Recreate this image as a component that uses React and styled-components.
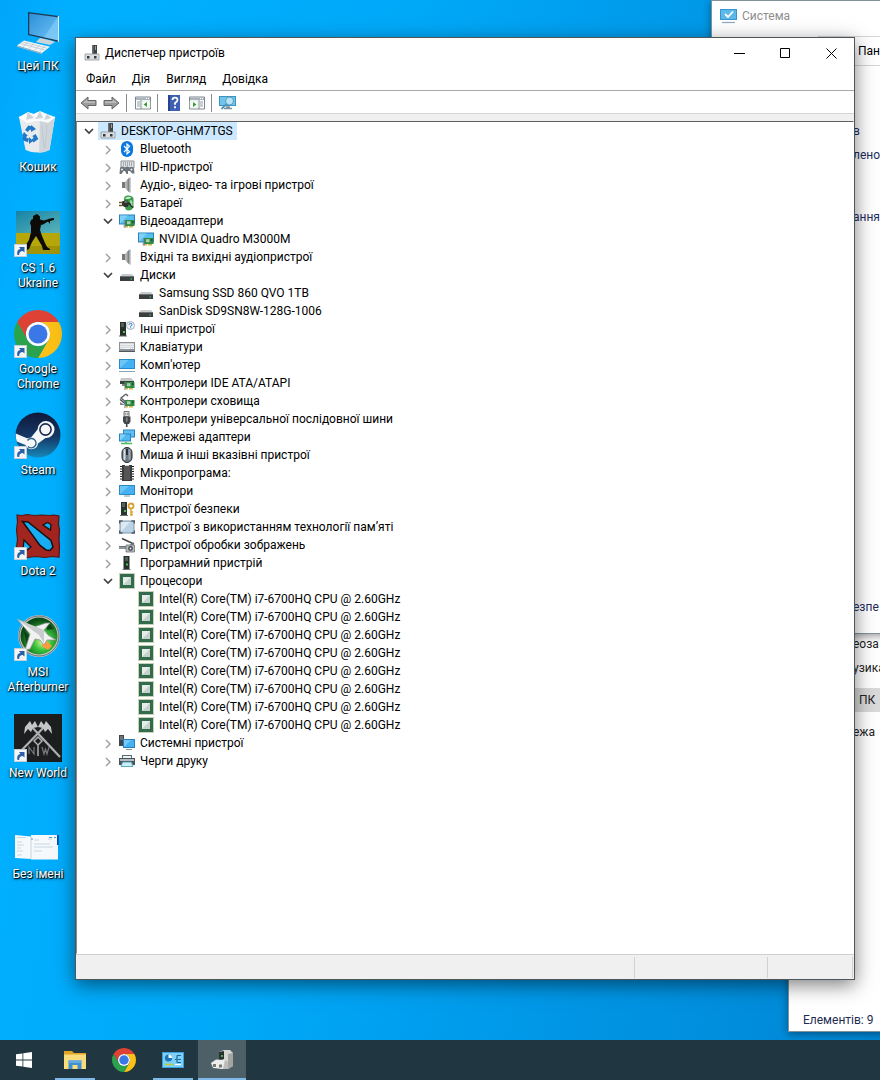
import React, { useState } from "react";
import styled, { createGlobalStyle, css } from "styled-components";

const UI_FONT = '"Segoe UI", Roboto, "Open Sans", sans-serif';

const GlobalStyle = createGlobalStyle`
  *, *::before, *::after { box-sizing: border-box; }
  body {
    margin: 0;
    font-family: ${UI_FONT};
    font-size: 12px;
    line-height: 18px;
    color: #000;
  }
  button {
    margin: 0;
    padding: 0;
    border: 0;
    background: none;
    font: inherit;
    color: inherit;
  }
  ul { margin: 0; padding: 0; list-style: none; }
  svg { display: block; flex: none; }
`;

/* ---------- shell ---------- */

const Screen = styled.div`
  display: flex;
  flex-direction: column;
  height: 100vh;
  min-height: 900px;
  overflow: hidden;
`;

const Desktop = styled.main`
  position: relative;
  flex: 1;
  overflow: hidden;
  background: linear-gradient(100deg, #00a6fb 0%, #00b0ff 8%, #00a8f8 40%, #0095e4 72%, #0086d4 100%);
`;

const Shortcuts = styled.ul`
  width: 76px;
`;

const ShortcutCell = styled.li`
  height: 101px;
  padding-top: 7px;
`;

const ShortcutButton = styled.button`
  display: flex;
  flex-direction: column;
  align-items: center;
  gap: 4px;
  width: 100%;
`;

const ShortcutPicture = styled.span`
  position: relative;
  width: 48px;
  height: 48px;
`;

const ArrowBadge = styled.span`
  position: absolute;
  left: 0;
  bottom: 0;
`;

const ShortcutLabel = styled.span`
  font-size: 12px;
  line-height: 15px;
  color: #fff;
  text-shadow: 1px 1px 1px #000, 0 1px 3px rgba(0, 0, 0, 0.8);
`;

/* ---------- windows ---------- */

const WindowFrame = styled.section`
  position: absolute;
  display: flex;
  flex-direction: column;
  background: #fff;
  border: 1px solid ${(p) => (p.$active ? "#4d565b" : "#7f929c")};
  box-shadow: ${(p) =>
    p.$active ? "0 5px 18px rgba(0, 0, 0, 0.5)" : "0 2px 8px rgba(0, 0, 0, 0.4)"};
`;

const ExplorerFrame = styled(WindowFrame)`
  left: 788px;
  right: -20px;
  top: 560px;
  bottom: 8px;
`;

const SystemFrame = styled(WindowFrame)`
  left: 711px;
  right: -20px;
  top: 0;
  height: 634px;
`;

const ManagerFrame = styled(WindowFrame)`
  left: 75px;
  right: 25px;
  top: 37px;
  bottom: 60px;
`;

const TitleBar = styled.header`
  display: flex;
  align-items: center;
  height: 30px;
  padding-left: 8px;
  gap: 5px;
  color: ${(p) => (p.$muted ? "#8f8f8f" : "#000")};
`;

const Title = styled.h1`
  flex: 1;
  margin: 0;
  font-size: 12px;
  font-weight: 400;
  white-space: nowrap;
`;

const CaptionButtons = styled.div`
  display: flex;
`;

const CaptionButton = styled.button`
  display: flex;
  align-items: center;
  justify-content: center;
  width: 46px;
  height: 28px;
`;

const MenuBar = styled.nav`
  display: flex;
  height: 22px;
  padding: 0 2px;
`;

const MenuButton = styled.button`
  padding: 0 8px;
  line-height: 22px;
`;

const ToolBar = styled.div`
  display: flex;
  align-items: center;
  gap: 6px;
  height: 24px;
  padding: 2px 0 0 4px;
  border-top: 1px solid #a9a9a9;
  border-bottom: 1px solid #d5d5d5;
`;

const ToolButton = styled.button`
  width: 17px;
  height: 18px;
  display: flex;
  align-items: center;
  justify-content: center;
`;

const ToolDivider = styled.span`
  width: 1px;
  height: 18px;
  margin-right: 1px;
  background: #8a8a8a;
`;

const TreeArea = styled.div`
  display: flex;
  flex-direction: column;
  flex: 1;
  min-height: 0;
  padding-top: 7px;
  background: #f0f0f0;
`;

const TreePane = styled.div`
  flex: 1;
  padding-left: 5px;
  overflow: hidden;
  background: #fff;
  border: 1px solid #fff;
  border-top-color: #606060;
  border-left-color: #828790;
`;

const Branch = styled.ul`
  margin-left: ${(p) => (p.$root ? 0 : 19)}px;
`;

const Row = styled.div`
  display: flex;
  align-items: center;
  gap: 2px;
  height: 18px;
`;

const Expander = styled.button`
  display: flex;
  align-items: center;
  justify-content: center;
  width: 14px;
  height: 18px;
`;

const ExpanderSpace = styled.span`
  width: 14px;
`;

const Entry = styled.button`
  display: flex;
  align-items: center;
  gap: 5px;
  height: 18px;
  padding: 0 4px 0 2px;
  white-space: nowrap;
  ${(p) => p.$selected && css`background: #cce8ff;`}
`;

const StatusBar = styled.footer`
  display: flex;
  height: 25px;
  padding: 2px 1px 1px;
  background: #f0f0f0;
  border-top: 1px solid #d0d0d0;
`;

const StatusCell = styled.span`
  flex: ${(p) => p.$grow ? "1" : "none"};
  width: ${(p) => p.$width || "auto"};
  border-right: 1px solid #d0d0d0;
`;

const AddressBar = styled.div`
  margin-left: 106px;
  height: 30px;
  margin-top: 5px;
  padding-left: 39px;
  border: 1px solid #d5d5d5;
  line-height: 28px;
  white-space: nowrap;
`;

const LinkList = styled.nav`
  display: flex;
  flex-direction: column;
  flex: 1;
  align-items: flex-start;
  padding: 56px 0 17px 141px;
`;

const PanelLink = styled.a`
  margin-bottom: ${(p) => p.$after || 0}px;
  color: #1e2c60;
  text-decoration: none;
  white-space: nowrap;
  &:last-child { margin-top: auto; }
`;

const FolderList = styled.ul`
  flex: 1;
  padding-top: 71px;
`;

const Folder = styled.li`
  height: 24px;
  margin-bottom: ${(p) => p.$after || 0}px;
  padding-left: ${(p) => (p.$current ? 70 : 64)}px;
  line-height: 24px;
  white-space: nowrap;
  color: #222;
  background: ${(p) => (p.$current ? "#d9d9d9" : "transparent")};
`;

const FolderStatus = styled.footer`
  height: 22px;
  padding-left: 14px;
  line-height: 22px;
  color: #1e2c50;
`;

/* ---------- taskbar ---------- */

const TaskBar = styled.footer`
  display: flex;
  height: 40px;
  background: #203640;
`;

const TaskButton = styled.button`
  position: relative;
  display: flex;
  align-items: center;
  justify-content: center;
  width: 48px;
  height: 40px;
  background: ${(p) => (p.$active ? "#4d5f67" : "transparent")};
  ${(p) =>
    p.$running &&
    css`
      &::after {
        content: "";
        position: absolute;
        left: ${p.$active ? 0 : 4}px;
        right: ${p.$active ? 0 : 4}px;
        bottom: 0;
        height: 2px;
        background: #7fb9ea;
      }
    `}
`;

const Running = styled.div`
  display: flex;
  gap: 1px;
  margin-left: 3px;
`;

/* ---------- desktop drawings ---------- */

const Big = ({ children }) => (
  <svg width="48" height="48" viewBox="0 0 48 48" aria-hidden="true">{children}</svg>
);

const ThisPcArt = () => (
  <Big>
    <defs>
      <linearGradient id="pcScreen" x1="0" y1="0" x2="1" y2="1">
        <stop offset="0" stopColor="#2f8fd8" /><stop offset="1" stopColor="#6cc3f7" />
      </linearGradient>
    </defs>
    <path d="M14 5 45 9V35L14 28Z" fill="#1d3c55" />
    <path d="M15.3 6.5 43.8 10.2V33.3L15.3 27Z" fill="url(#pcScreen)" />
    <path d="M43.8 10.2V33.3L30 30.2Z" fill="#8fd3fb" opacity=".55" />
    <path d="M45 9V35L43.8 34.7V9Z" fill="#dfeaf1" />
    <path d="M26 31 36 33.2 41 35 36 38 22 35Z" fill="#c9d4db" />
    <path d="M10 33.5 36 39.8 28 46 3 38.5Z" fill="#f3f5f6" />
    <path d="M3 38.5 28 46V47.2L3 39.8Z" fill="#a9b7c0" />
    <path d="M8.5 35 33 41.2M6.5 36.6 30.8 43M14 34.6 9 39.8M20 36 15 41.6M26 37.6 20.500 43.400M31 38.900 25.500 45" stroke="#b9c5cc" strokeWidth=".8" />
  </Big>
);

const BinArt = () => (
  <Big>
    <path d="M5 9 41 9 35.500 42Q23 47 11.500 42Z" fill="#e7ebee" />
    <path d="M26 10 41 9 35.500 42Q30 45 25 45Z" fill="#cfd6db" />
    <path d="M5 9 14 4 20 6 26 3 33 6 41 9 34 14 24 12 13 14Z" fill="#f7f9fa" />
    <path d="M14 4 20 10 11 12ZM26 3 29 10 21 11ZM33 6 37 10 30 12Z" fill="#cbd3d9" />
    <path d="M20 6 24 4 23 9ZM8 9 13 7 12 12Z" fill="#fff" />
    <path d="M5 9 13 14 24 12 34 14 41 9" fill="none" stroke="#fff" strokeWidth="1.200" />
    <g fill="none" stroke="#2178c4" strokeWidth="3.600">
      <path d="M12.500 23 15 19.500 18.500 20.500" /><path d="M20 27 22 30.500 18.500 33" /><path d="M14.500 32.500 10.500 31 11 27" />
    </g>
    <path d="M17 17 22 21 17 24ZM15 29 15 36 19 33ZM8 28 14 28 10 24Z" fill="#2178c4" />
    <path d="M28 18 30 40M33 17 31 40" stroke="#bac4ca" strokeWidth=".8" />
  </Big>
);

const StrikeArt = () => (
  <Big>
    <defs>
      <linearGradient id="csSky" x1="0" y1="0" x2="1" y2="1">
        <stop offset="0" stopColor="#1583a6" /><stop offset="1" stopColor="#5bb5bb" />
      </linearGradient>
    </defs>
    <rect x="2" y="2" width="44" height="22" fill="url(#csSky)" />
    <rect x="2" y="24" width="44" height="21" fill="#b6a80b" />
    <path d="M2 37h44v8H2z" fill="#8e830c" opacity=".55" />
    <path d="M19 7 23 5 26 7.500 26 10.500 30 11.500 36 9.500 40 9V11L36 12V15L34 12.500 29 15.500 27 16 26 21 28 27 31 34 33 38 36 40V41H29L28 37 22 27 18 33 15 40 11 42 11 37 15 31 17 23 17 17 16 14 17 11 19 10Z" fill="#0d0b08" />
  </Big>
);

const ChromeShapes = () => (
  <>
    <path d="M24 12H44.780A24 24 0 0 0 3.220 12L13.610 30A12 12 0 0 1 24 12Z" fill="#de4235" />
    <path d="M44.780 12A24 24 0 0 1 24 48L34.390 30A12 12 0 0 0 24 12Z" fill="#fbc116" />
    <path d="M24 48A24 24 0 0 1 3.220 12L13.610 30A12 12 0 0 0 34.390 30Z" fill="#2ba24c" />
    <circle cx="24" cy="24" r="12" fill="#fff" />
    <circle cx="24" cy="24" r="9.500" fill="#3b78e7" />
  </>
);

const ChromeArt = () => <Big><ChromeShapes /></Big>;

const SteamArt = () => (
  <Big>
    <defs>
      <linearGradient id="steamDisc" x1="0" y1="0" x2="0" y2="1">
        <stop offset="0" stopColor="#10183a" /><stop offset=".55" stopColor="#143a68" /><stop offset="1" stopColor="#1788b8" />
      </linearGradient>
    </defs>
    <circle cx="24" cy="24" r="22.500" fill="url(#steamDisc)" />
    <path d="M1.700 22.500 13 27.300 17 26.500 23.500 18.500A8.500 8.500 0 1 1 31.500 27L24 32.500A6.500 6.500 0 0 1 11.500 34L2.800 30.500A23 23 0 0 1 1.700 22.500Z" fill="#f5f7f9" />
    <circle cx="31.500" cy="18.500" r="5.600" fill="#f5f7f9" stroke="#1b2c50" strokeWidth="1.600" />
    <path d="M13.500 29.500A4.700 4.700 0 1 1 14 35.500" fill="none" stroke="#31628a" strokeWidth="1.400" />
  </Big>
);

const DotaArt = () => (
  <Big>
    <path d="M3 3 8 3.500 13 2.500 20 3.500 28 3 35 3.500 40 3 45 4 44.500 12 45.500 18 45 27 45.500 35 45 45 38 44.500 31 45.500 22 44.500 13 45.500 3 45 2.500 36 3.500 27 2.500 18 3.500 10Z" fill="#a3251f" stroke="#5a1512" strokeWidth="1.200" />
    <path d="M8.500 9.500 14 10 37 28.500 39 35 36 38.500 32 38 26 33.500Z" fill="#17aef5" stroke="#1a1212" strokeWidth="1.600" />
    <path d="M29 13 33.500 10.500 37 12.500 36.500 18Z" fill="#17aef5" stroke="#1a1212" strokeWidth="1.300" />
    <path d="M10 28 17 35 13 38 9 37Z" fill="#17aef5" stroke="#1a1212" strokeWidth="1.300" />
  </Big>
);

const AfterburnerArt = () => (
  <Big>
    <defs>
      <radialGradient id="msiGlow" cx=".6" cy=".65" r=".6">
        <stop offset="0" stopColor="#e6f7a0" /><stop offset=".4" stopColor="#35c33b" /><stop offset="1" stopColor="#0a4a17" />
      </radialGradient>
    </defs>
    <circle cx="25" cy="23" r="21" fill="#c3cac9" />
    <circle cx="25" cy="23" r="20" fill="none" stroke="#6b7472" />
    <circle cx="25" cy="23" r="18.500" fill="url(#msiGlow)" />
    <path d="M30 26 38 33 34 37 28 33Z" fill="#ff9a3c" />
    <path d="M10 18 17 24 13 33ZM33 8 40 16 33 17Z" fill="#072a0e" opacity=".7" />
    <path d="M3 6 20 14 26 12 32 10 36 10 30 17 34 22 42 27 33 27 30 32 26 27 21 26 16 36 11 37 16 21Z" fill="#f1f1f1" stroke="#8d9391" strokeWidth=".8" />
    <path d="M3 6 30 17 30 30 25 22Z" fill="#c6cccb" />
  </Big>
);

const NewWorldArt = () => (
  <Big>
    <rect width="48" height="48" fill="#1d1e20" />
    <g stroke="#aeb0b2" strokeWidth="2.200" fill="none">
      <path d="M16 11 46 43M32 11 4 40" />
    </g>
    <path d="M11 13 16 7 18 11 21 7 24 13 19 14 17 18 14 15 10 20ZM37 13 32 7 30 11 27 7 24 13 29 14 31 18 34 15 38 20Z" fill="#c3c5c6" />
    <path d="M24 23 28 27 24 31 20 27ZM24 31V42" fill="#1d1e20" stroke="#aeb0b2" strokeWidth="1.500" />
    <path d="M15 40V33L20 40V33M28 33 30 40 31.500 35 33 40 35 33" fill="none" stroke="#77797b" strokeWidth="1.200" />
  </Big>
);

const ThumbnailArt = () => (
  <Big>
    <path d="M1 20 17 21.500V20H44V44.500H17V44L1 43Z" fill="#f6f9fb" />
    <path d="M43 20h1.800v10H43z" fill="#0a4fae" />
    <path d="M3 22.500h9M3 27h5M3 30h7M3 33h4M3 36h6M3 40h5M20 25h5M20 29h16M20 32h19M20 36h8M17 22v22M34 24h4" stroke="#c7d6e0" strokeWidth="1" />
    <path d="M35 22.500h3M40 22.500h2M17 24h2" stroke="#4e9bd6" strokeWidth="1" />
  </Big>
);

const ArrowArt = () => (
  <svg width="13" height="13" viewBox="0 0 13 13" aria-hidden="true">
    <rect x=".5" y=".5" width="12" height="12" fill="#f4f7fa" stroke="#c4ccd4" />
    <path d="M3.500 11C2.500 7.500 4 5.300 6.500 5L5 3H10.500V8.500L8.700 6.900C6.500 7 5 8.200 5.200 11Z" fill="#2b5fa8" />
  </svg>
);

/* ---------- small drawings ---------- */

const Small = ({ children, size = 16 }) => (
  <svg width={size} height={size} viewBox="0 0 16 16" aria-hidden="true">{children}</svg>
);

const Pc = () => (
  <Small>
    <path d="M8 0h5v9H8z" fill="#3f4447" /><path d="M11 1h1v4h-1zM9 1.500h1M9 3h1" fill="#9aa0a4" />
    <path d="M8 0h1.500v9H8z" fill="#6d7275" />
    <path d="M1 9h14v6H1z" fill="#dcdfe1" stroke="#8f9699" strokeWidth=".8" />
    <path d="M3 11h2.500v2.500H3zM10 11h2.500v2.500H10z" fill="#34393c" />
  </Small>
);
const Bluetooth = () => (
  <Small>
    <rect x="2" y="0" width="12" height="16" rx="6" fill="#0a78e0" />
    <path d="M5 5 10.500 10.700 8 13V3L10.500 5.300 5 11" fill="none" stroke="#fff" strokeWidth="1.200" />
  </Small>
);
const Hid = () => (
  <Small>
    <path d="M2 2h13v7H2z" fill="#dfe3e6" stroke="#8a9196" />
    <path d="M4 4h1M6 4h1M8 4h1M10 4h1M12 4h1M4 6h1M6 6h1M8 6h1M10 6h1M12 6h1" stroke="#6b7277" />
    <path d="M1 9Q3 6.500 6 8.500Q8 6.500 10.500 8.500Q14 6.500 15 9.500L15.500 14.500H13L11 12H9V15H7.500L6 12H4.500L2.500 15H.5Z" fill="#6d757b" />
    <path d="M3 9.500v2M2 10.500h2M12.500 9.500v2M11.500 10.500h2" stroke="#e8ecee" />
  </Small>
);
const Speaker = () => (
  <Small>
    <path d="M3 5h3v6H3z" fill="#77797b" />
    <path d="M6 5 10.500 .5V15.500L6 11Z" fill="#b4b7b9" />
    <path d="M8.500 2.500 10.500 .5V15.500L8.500 13.500Z" fill="#808487" />
    <path d="M11 .5v15" stroke="#a9acae" strokeWidth="1.200" />
  </Small>
);
const Battery = () => (
  <Small>
    <path d="M5 4Q5 0 10 .5Q14.500 1 14.500 4V11Q14 15.500 9 15.500Q6 15 6 12Z" fill="#3a9a4c" />
    <path d="M6 3.500Q8 .5 12.500 2.500Q10 5 6 3.500Z" fill="#c9e9c8" /><path d="M11 5Q13.500 5 13.500 7V11H11Z" fill="#9fdca0" />
    <path d="M3 6.500 6 5.500H8.500L10.500 8.500 8.500 12H5.500L3 10.500Z" fill="#2c3230" />
    <path d="M0 7.500h3.500M0 10.500h3.500" stroke="#6a5a25" strokeWidth="1.300" />
    <path d="M10 8.500C13 8.500 10 12.500 14.500 12" fill="none" stroke="#1e2422" strokeWidth="1.300" />
    <path d="M5.500 7h3" stroke="#9bb09c" />
  </Small>
);
const Card = ({ x = 6, y = 7 }) => (
  <g transform={`translate(${x} ${y})`}>
    <path d="M0 0h9.500v6H0z" fill="#2f8a45" /><path d="M2 1.200h3.500v3H2z" fill="#a9cfae" />
    <path d="M7 1h1.500v2H7z" fill="#17562a" /><path d="M1 6h2v1.500H1zM4 6h4v1.500H4z" fill="#d6b548" />
    <path d="M0 0v8" stroke="#6c7276" />
  </g>
);
const Adapter = () => (
  <Small>
    <path d="M0 1.500h16v10H0z" fill="#2a7fb5" /><path d="M1 2.500h14v8H1z" fill="#57bff0" />
    <path d="M1 10.500 9 2.500H1Z" fill="#7fd2f7" /><path d="M4 13h5" stroke="#9aa7af" />
    <Card />
  </Small>
);
const Disk = () => (
  <Small>
    <path d="M3 7h10l1.500 2H1.500Z" fill="#c9cccd" /><path d="M1 9h14v5H1z" fill="#3a3e40" />
    <path d="M1 9h14v1H1z" fill="#6f7476" /><path d="M11.500 11.500h1.500v1H11.500z" fill="#4ee06a" />
  </Small>
);
const Unknown = () => (
  <Small>
    <path d="M1 1h6v14H1z" fill="#263029" /><path d="M2 3h3M2 5h3" stroke="#7b8b80" /><path d="M4 10h2v2H4z" fill="#50c058" />
    <path d="M0 15h8" stroke="#596360" />
    <circle cx="11.500" cy="4.500" r="4" fill="#eef4f9" stroke="#8fa5b6" strokeWidth=".8" />
    <path d="M10 3.800Q10 2.300 11.500 2.300T13 3.700Q13 4.500 11.600 5V5.600M11.600 6.400V7.300" fill="none" stroke="#2d67a5" strokeWidth=".9" />
  </Small>
);
const Keyboard = () => (
  <Small>
    <path d="M0 3h16v9H0z" fill="#8b9297" /><path d="M1 4h14v6H1z" fill="#d5d9dc" />
    <path d="M1.500 5.500h13M1.500 7.500h13M1.500 9.500h3M12 9.500h3" stroke="#fff" strokeDasharray="1 1" /><path d="M5 9.500h6" stroke="#fff" />
    <path d="M0 12.500h16" stroke="#4f575c" />
  </Small>
);
const Screenlet = ({ stand = true }) => (
  <Small>
    <path d="M0 2h16v10H0z" fill="#2a8ac8" /><path d="M1 3h14v8H1z" fill="#45b1f3" /><path d="M1 11 10 3H1Z" fill="#6cc6f8" />
    {stand && <path d="M0 14.500h16" stroke="#8ba3b3" />}
    {!stand && <path d="M5 13h6" stroke="#7f98a8" />}
  </Small>
);
const Ide = () => (
  <Small>
    <path d="M2 3h10l3 3H1Z" fill="#c3c7c6" /><path d="M1 6h14v3H1z" fill="#39433e" /><path d="M3 9h4v2H3z" fill="#7b8580" />
    <Card />
  </Small>
);
const Storage = () => (
  <Small>
    <path d="M7 1 2 5 7 9 9 7M7 1 9 3" fill="none" stroke="#596066" strokeWidth="1.400" />
    <path d="M1 9 6 12H1V9" fill="#7d858a" /><path d="M1 6.500 8 12" stroke="#3d4448" strokeWidth="1.300" />
    <Card />
  </Small>
);
const Usb = () => (
  <Small>
    <path d="M5 .5h5v5H5z" fill="#d8dadb" stroke="#72777a" /><path d="M6.200 3h1M8.200 3h1" stroke="#4c5154" />
    <path d="M4 5.500h7.500v5L10 13H5.500L4 10.500Z" fill="#44484b" /><path d="M7.700 13v3" stroke="#44484b" strokeWidth="1.600" />
    <path d="M7 6.500h1.500v4H7z" fill="#888d90" />
  </Small>
);
const Network = () => (
  <Small>
    <path d="M4 .5h12v8H4z" fill="#2b83bc" /><path d="M5 1.500h10v6H5z" fill="#5cc0f2" />
    <path d="M0 4.500h12v8H0z" fill="#2b83bc" /><path d="M1 5.500h10v6H1z" fill="#4fb8f0" /><path d="M1 11.500 7 5.500H1Z" fill="#86d3f8" />
    <path d="M2 14.500h11M7 13v2" stroke="#4dbb5c" strokeWidth="1.600" />
  </Small>
);
const Mouse = () => (
  <Small>
    <rect x="3" y=".5" width="10" height="15" rx="5" fill="#6d7781" stroke="#23282d" />
    <rect x="4.500" y="2" width="2" height="11" rx="1" fill="#d5dde5" /><rect x="9.500" y="2" width="2" height="11" rx="1" fill="#9aa5b0" />
    <path d="M8 2v6" stroke="#15191d" strokeWidth="1.500" />
  </Small>
);
const Firmware = () => (
  <Small>
    <path d="M3 0h10v16H3z" fill="#3b3b3b" /><path d="M5 1h6v14H5z" fill="#555" />
    <path d="M2 1v15M14 1v15" stroke="#222" strokeWidth="2" strokeDasharray="1 1.500" /><path d="M6 0h4v1H6z" fill="#ddd" />
  </Small>
);
const Security = () => (
  <Small>
    <path d="M2 1h6v13H2z" fill="#2b342f" /><path d="M3 3h3M3 5h3" stroke="#829087" /><path d="M5 9h2v2H5z" fill="#4fc35a" /><path d="M1 14.500h8" stroke="#6d7470" />
    <circle cx="12" cy="5" r="2.500" fill="none" stroke="#d9a233" strokeWidth="1.800" />
    <path d="M12 7v8M12 11h2M12 13.500h2" stroke="#d9a233" strokeWidth="1.500" />
  </Small>
);
const Memory = () => (
  <Small>
    <rect x="1" y="2" width="14" height="12" rx="2" fill="#b9d2e6" stroke="#8696a3" />
    <path d="M2 13 11 3H2Z" fill="#dce9f3" />
    <path d="M.5 4.500V2H3.500M12.500 2H15.500V4.500M.5 11.500V14H3.500M12.500 14H15.500V11.500" fill="none" stroke="#4b5964" strokeWidth="1.400" />
  </Small>
);
const Imaging = () => (
  <Small>
    <path d="M3 1.500 15 7" stroke="#3f4447" strokeWidth="1.400" /><path d="M0 9.500h9l5-3v3" fill="none" stroke="#6c7276" strokeWidth="1.200" />
    <path d="M0 10h7v2H0z" fill="#8f9699" /><path d="M7 8h8.500v7H7z" fill="#b7bcbf" stroke="#6c7276" strokeWidth=".8" />
    <circle cx="11.500" cy="11.500" r="2.400" fill="#444a4e" /><circle cx="11.500" cy="11.500" r="1" fill="#e3e7e9" />
  </Small>
);
const Software = () => (
  <Small>
    <path d="M4.500 1h6v13h-6z" fill="#26302a" /><path d="M6 3h3M6 5h3" stroke="#7d8b82" /><path d="M7 8.500h2v2H7z" fill="#4fc35a" />
    <path d="M3.500 14.500h8" stroke="#6d7470" />
  </Small>
);
const Cpu = () => (
  <Small>
    <rect x=".5" y=".5" width="15" height="15" fill="none" stroke="#93a56c" strokeDasharray="1 1" />
    <path d="M1 1h14v14H1z" fill="#336c4d" /><path d="M4 4h8v8H4z" fill="#c5d2cb" /><path d="M4 12 12 4H4Z" fill="#e6ece8" />
  </Small>
);
const SystemDevices = () => (
  <Small>
    <path d="M0 0h5v11H0z" fill="#3d474d" /><path d="M1 2h3M1 4h3" stroke="#98a4ab" />
    <path d="M4 4h12v9H4z" fill="#2a7fb8" /><path d="M5 5h10v7H5z" fill="#47b2f2" /><path d="M5 12 12 5H5Z" fill="#74caf8" /><path d="M7 14.500h6" stroke="#7f98a8" />
  </Small>
);
const Printer = () => (
  <Small>
    <path d="M3 2h10v4H3z" fill="#5d6b72" /><path d="M4 3h8v3H4z" fill="#eaf4f7" />
    <path d="M0 5h16v7H0z" fill="#4c5458" /><path d="M1 6h14v2H1z" fill="#b5bbbe" />
    <path d="M3.500 9h9l1.500 4.500H2Z" fill="#c9eef5" stroke="#3f98ac" strokeWidth=".8" />
  </Small>
);

const BackArrow = ({ flip }) => (
  <svg width="17" height="16" viewBox="0 0 17 16" aria-hidden="true">
    <g transform={flip ? "matrix(-1 0 0 1 17 0)" : undefined}>
      <path d="M1 8 8 2V5.500H16V10.500H8V14Z" fill="#9a9a9a" stroke="#666" />
      <path d="M3 8 7 4.500V6.500H15V8Z" fill="#bdbdbd" />
    </g>
  </svg>
);
const PanelIcon = ({ flip }) => (
  <Small>
    <path d="M.5 2h15v12H.5z" fill="#fff" stroke="#7c8790" /><path d="M1 2.500h14v2.500H1z" fill="#a9b4bd" /><path d="M11 3.500h1M13 3.500h1" stroke="#fff" />
    <g transform={flip ? "matrix(-1 0 0 1 16 0)" : undefined}>
      <path d="M6 5v9" stroke="#7c8790" /><path d="M2 7h3M2 9h3M2 11h3" stroke="#8fa0ac" />
      <path d="M12 7v5L8.500 9.500Z" fill="#3b9a3f" /><path d="M7 6h8v7H7z" fill="none" stroke="#cfe3c4" strokeWidth=".6" />
    </g>
  </Small>
);
const HelpIcon = () => (
  <Small>
    <path d="M2 0h12v16H2z" fill="#3d5fb4" /><path d="M2 0h2v16H2z" fill="#27438f" />
    <path d="M6.500 5Q6.500 2.700 9 2.700T11.500 5Q11.500 6.500 9 8V9.800M9 11.300V13.300" fill="none" stroke="#fff" strokeWidth="1.800" />
  </Small>
);
const ScanIcon = () => (
  <svg width="17" height="16" viewBox="0 0 17 16" aria-hidden="true">
    <path d="M0 1h17v10H0z" fill="#3b93c4" /><path d="M1 2h15v8H1z" fill="#71c5ea" />
    <path d="M5 13.500h8M7 12h4" stroke="#7c939f" strokeWidth="1.500" />
    <circle cx="10.500" cy="6" r="4" fill="#b6e4f6" stroke="#5a9dbb" /><path d="M7.500 9 2.500 14" stroke="#4e94b5" strokeWidth="1.800" />
  </svg>
);
const SystemIcon = () => (
  <svg width="17" height="16" viewBox="0 0 17 16" aria-hidden="true">
    <path d="M0 1h17v11H0z" fill="#3a95cf" /><path d="M1 2h15v9H1z" fill="#5bb9ec" />
    <path d="M5 6 8 9 13 3.500" fill="none" stroke="#fff" strokeWidth="1.800" /><path d="M2 14.500h13" stroke="#8aa9bd" strokeWidth="1.200" />
  </svg>
);

const Chevron = ({ open }) => (
  <svg width="12" height="12" viewBox="0 0 12 12" aria-hidden="true">
    {open
      ? <path d="M2 4 6 8 10 4" fill="none" stroke="#404040" strokeWidth="1.700" />
      : <path d="M4 3 8 7 4 11" fill="none" stroke="#a3a3a3" strokeWidth="1.500" />}
  </svg>
);

/* ---------- taskbar drawings ---------- */

const StartArt = () => (
  <svg width="16" height="16" viewBox="0 0 16 16" aria-hidden="true">
    <path d="M0 2.300 6.500 1.400V7.600H0ZM7.300 1.300 16 0V7.600H7.300ZM0 8.400H6.500V14.600L0 13.700ZM7.300 8.400H16V16L7.300 14.700Z" fill="#fff" />
  </svg>
);
const FolderArt = () => (
  <svg width="22" height="20" viewBox="0 0 22 20" aria-hidden="true">
    <path d="M0 1h8l2 2h12v15H0z" fill="#e0a526" /><path d="M0 4.500h22V19H0z" fill="#fbdc7c" />
    <path d="M4.500 19V10.500H17.500V19H13.500V15H8.500V19Z" fill="#3f8fd2" /><path d="M4.500 10.500h13V13H4.500z" fill="#5fa9e4" />
  </svg>
);
const ControlArt = () => (
  <svg width="22" height="16" viewBox="0 0 22 16" aria-hidden="true">
    <path d="M0 0h22v16H0z" fill="#3aa0df" /><path d="M1 1h20v14H1z" fill="#7fd0f6" />
    <circle cx="6.500" cy="6" r="3.600" fill="#1b76b9" /><path d="M6.500 6V2.400A3.600 3.600 0 0 1 10.100 6Z" fill="#f2fbff" />
    <path d="M15 3.500h4M13 7.500h2M16 7.500h3M15 10.500h4M15 3.500v7" fill="none" stroke="#16659f" strokeWidth="1.200" />
    <path d="M3 12.500h8" stroke="#b6cf3a" strokeWidth="1.600" /><path d="M13 12.500h6" stroke="#fff" />
  </svg>
);
const DeviceArt = () => (
  <svg width="22" height="22" viewBox="0 0 22 22" aria-hidden="true">
    <path d="M8 3 13 1H19L22 4V17L17 20H9L8 14Z" fill="#d7d7d5" /><path d="M17 5 22 4V17L17 20Z" fill="#a5a5a2" />
    <path d="M8 3 13 2V10L8 12Z" fill="#26332b" /><path d="M10 6h2v2h-2z" fill="#55a45c" />
    <path d="M0 14 5 10.500 14 11 12 20 2 19Z" fill="#ececea" /><path d="M2 15h3v3H2zM8 15.500h3v3H8z" fill="#777774" />
    <path d="M12 20 14 11 17 13V20Z" fill="#bcbcb8" />
  </svg>
);

/* ---------- data ---------- */

const processors = Array.from({ length: 8 }, () => ({
  label: "Intel(R) Core(TM) i7-6700HQ CPU @ 2.60GHz",
  icon: Cpu,
}));

const devices = {
  label: "DESKTOP-GHM7TGS",
  icon: Pc,
  open: true,
  selected: true,
  children: [
    { label: "Bluetooth", icon: Bluetooth, more: true },
    { label: "HID-пристрої", icon: Hid, more: true },
    { label: "Аудіо-, відео- та ігрові пристрої", icon: Speaker, more: true },
    { label: "Батареї", icon: Battery, more: true },
    { label: "Відеоадаптери", icon: Adapter, open: true, children: [{ label: "NVIDIA Quadro M3000M", icon: Adapter }] },
    { label: "Вхідні та вихідні аудіопристрої", icon: Speaker, more: true },
    {
      label: "Диски",
      icon: Disk,
      open: true,
      children: [
        { label: "Samsung SSD 860 QVO 1TB", icon: Disk },
        { label: "SanDisk SD9SN8W-128G-1006", icon: Disk },
      ],
    },
    { label: "Інші пристрої", icon: Unknown, more: true },
    { label: "Клавіатури", icon: Keyboard, more: true },
    { label: "Комп'ютер", icon: Screenlet, more: true },
    { label: "Контролери IDE ATA/ATAPI", icon: Ide, more: true },
    { label: "Контролери сховища", icon: Storage, more: true },
    { label: "Контролери універсальної послідовної шини", icon: Usb, more: true },
    { label: "Мережеві адаптери", icon: Network, more: true },
    { label: "Миша й інші вказівні пристрої", icon: Mouse, more: true },
    { label: "Мікропрограма:", icon: Firmware, more: true },
    { label: "Монітори", icon: () => <Screenlet stand={false} />, more: true },
    { label: "Пристрої безпеки", icon: Security, more: true },
    { label: "Пристрої з використанням технології пам’яті", icon: Memory, more: true },
    { label: "Пристрої обробки зображень", icon: Imaging, more: true },
    { label: "Програмний пристрій", icon: Software, more: true },
    { label: "Процесори", icon: Cpu, open: true, children: processors },
    { label: "Системні пристрої", icon: SystemDevices, more: true },
    { label: "Черги друку", icon: Printer, more: true },
  ],
};

const shortcuts = [
  { lines: ["Цей ПК"], art: ThisPcArt },
  { lines: ["Кошик"], art: BinArt },
  { lines: ["CS 1.6", "Ukraine"], art: StrikeArt, link: true },
  { lines: ["Google", "Chrome"], art: ChromeArt, link: true },
  { lines: ["Steam"], art: SteamArt, link: true },
  { lines: ["Dota 2"], art: DotaArt, link: true },
  { lines: ["MSI", "Afterburner"], art: AfterburnerArt, link: true },
  { lines: ["New World"], art: NewWorldArt, link: true },
  { lines: ["Без імені"], art: ThumbnailArt },
];

/* ---------- parts ---------- */

function TreeNode({ node }) {
  const [open, setOpen] = useState(Boolean(node.open));
  const Icon = node.icon;
  const expandable = node.more || node.children;
  return (
    <li>
      <Row>
        {expandable ? (
          <Expander aria-label={node.label} aria-expanded={open} onClick={() => setOpen(!open)}>
            <Chevron open={open} />
          </Expander>
        ) : (
          <ExpanderSpace />
        )}
        <Entry $selected={node.selected}>
          <Icon />
          {node.label}
        </Entry>
      </Row>
      {open && node.children && (
        <Branch>
          {node.children.map((child, i) => <TreeNode key={i} node={child} />)}
        </Branch>
      )}
    </li>
  );
}

function DeviceManager() {
  return (
    <ManagerFrame $active>
      <TitleBar>
        <Pc />
        <Title>Диспетчер пристроїв</Title>
        <CaptionButtons>
          <CaptionButton aria-label="Згорнути">
            <svg width="11" height="11"><path d="M0 5.500h11" stroke="#000" /></svg>
          </CaptionButton>
          <CaptionButton aria-label="Розгорнути">
            <svg width="11" height="11"><path d="M.5 .5h9v9H.5z" fill="none" stroke="#000" /></svg>
          </CaptionButton>
          <CaptionButton aria-label="Закрити">
            <svg width="11" height="11"><path d="M.5 .5l10 10M10.500 .5l-10 10" stroke="#000" /></svg>
          </CaptionButton>
        </CaptionButtons>
      </TitleBar>
      <MenuBar>
        {["Файл", "Дія", "Вигляд", "Довідка"].map((m) => <MenuButton key={m}>{m}</MenuButton>)}
      </MenuBar>
      <ToolBar>
        <ToolButton aria-label="Назад"><BackArrow /></ToolButton>
        <ToolButton aria-label="Вперед"><BackArrow flip /></ToolButton>
        <ToolDivider />
        <ToolButton aria-label="Дерево консолі"><PanelIcon /></ToolButton>
        <ToolDivider />
        <ToolButton aria-label="Довідка"><HelpIcon /></ToolButton>
        <ToolButton aria-label="Область дій"><PanelIcon flip /></ToolButton>
        <ToolDivider />
        <ToolButton aria-label="Оновити конфігурацію"><ScanIcon /></ToolButton>
      </ToolBar>
      <TreeArea>
        <TreePane>
          <Branch $root><TreeNode node={devices} /></Branch>
        </TreePane>
      </TreeArea>
      <StatusBar>
        <StatusCell $grow />
        <StatusCell $width="133px" />
        <StatusCell $width="85px" />
      </StatusBar>
    </ManagerFrame>
  );
}

export default function App() {
  return (
    <Screen>
      <GlobalStyle />
      <Desktop>
        <Shortcuts>
          {shortcuts.map(({ lines, art: Art, link }) => (
            <ShortcutCell key={lines[0]}>
              <ShortcutButton>
                <ShortcutPicture>
                  <Art />
                  {link && <ArrowBadge><ArrowArt /></ArrowBadge>}
                </ShortcutPicture>
                <ShortcutLabel>
                  {lines.map((line, i) => <React.Fragment key={line}>{i > 0 && <br />}{line}</React.Fragment>)}
                </ShortcutLabel>
              </ShortcutButton>
            </ShortcutCell>
          ))}
        </Shortcuts>

        <ExplorerFrame>
          <FolderList>
            <Folder>еоза</Folder>
            <Folder $after={8}>узика</Folder>
            <Folder $current $after={8}>ПК</Folder>
            <Folder>ежа</Folder>
          </FolderList>
          <FolderStatus>Елементів: 9</FolderStatus>
        </ExplorerFrame>

        <SystemFrame>
          <TitleBar $muted><SystemIcon /><Title>Система</Title></TitleBar>
          <AddressBar>Пан</AddressBar>
          <LinkList>
            <PanelLink href="#devices" $after={6}>в</PanelLink>
            <PanelLink href="#remote" $after={44}>лено</PanelLink>
            <PanelLink href="#protection">ання</PanelLink>
            <PanelLink href="#security">езпе</PanelLink>
          </LinkList>
        </SystemFrame>

        <DeviceManager />
      </Desktop>

      <TaskBar>
        <TaskButton aria-label="Пуск"><StartArt /></TaskButton>
        <Running>
          <TaskButton aria-label="Провідник" $running><FolderArt /></TaskButton>
          <TaskButton aria-label="Google Chrome">
            <svg width="24" height="24" viewBox="0 0 48 48" aria-hidden="true"><ChromeShapes /></svg>
          </TaskButton>
          <TaskButton aria-label="Панель керування" $running><ControlArt /></TaskButton>
          <TaskButton aria-label="Диспетчер пристроїв" $running $active><DeviceArt /></TaskButton>
        </Running>
      </TaskBar>
    </Screen>
  );
}
